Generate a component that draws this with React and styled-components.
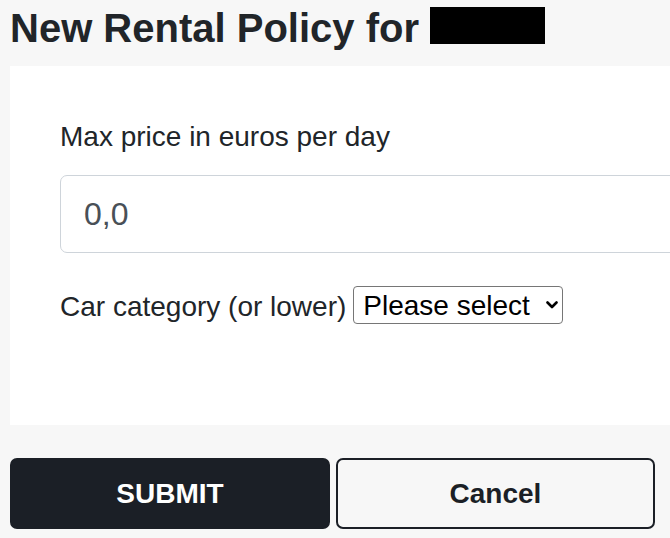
import React, {useState} from "react";
import styled, {createGlobalStyle} from "styled-components";

const GlobalStyle = createGlobalStyle`
  html, body {
    margin: 0;
    padding: 0;
    background-color: #f7f7f7;
    overflow: hidden;
  }

  body {
    font-family: "Liberation Sans", Arial, sans-serif;
    color: #212529;
  }
`;

const Page = styled.div`
  width: 670px;
  height: 538px;
  padding-left: 10px;
  box-sizing: border-box;
`;

const Title = styled.h1`
  margin: 0;
  padding-top: 4px;
  font-size: 40px;
  line-height: 48px;
  font-weight: 700;
  color: #212529;
  display: flex;
  align-items: center;
  gap: 11px;
  white-space: nowrap;
`;

const Redacted = styled.span`
  display: inline-block;
  width: 115px;
  height: 37px;
  background-color: #000;
  margin-top: -6px;
`;

const Card = styled.div`
  margin-top: 14px;
  width: 760px;
  height: 359px;
  box-sizing: border-box;
  background-color: #fff;
  padding: 50px 0 0 50px;
`;

const Label = styled.label`
  display: block;
  font-size: 28px;
  line-height: 42px;
  color: #212529;
  white-space: nowrap;
`;

const PriceInput = styled.input`
  display: block;
  margin-top: 17px;
  width: 100%;
  height: 78px;
  box-sizing: border-box;
  padding: 0 23px;
  border: 1px solid #ced4da;
  border-radius: 7px;
  font-family: inherit;
  font-size: 32px;
  color: #495057;
  background: #fff;
  outline: none;
`;

const CategoryRow = styled.div`
  margin-top: 33px;
  display: flex;
  align-items: center;
  gap: 7px;
  height: 42px;
`;

const SelectWrap = styled.div`
  position: relative;
  display: inline-block;
  margin-top: -4px;
`;

const Select = styled.select`
  appearance: none;
  -webkit-appearance: none;
  width: 210px;
  height: 38px;
  box-sizing: border-box;
  padding: 0 20px 0 9px;
  border: 1px solid #767676;
  border-radius: 4px;
  background: #fff;
  font-family: inherit;
  font-size: 28px;
  color: #000;
  outline: none;
`;

const Chevron = styled.svg`
  position: absolute;
  right: 5px;
  top: 50%;
  transform: translateY(-50%);
  width: 12px;
  height: 9px;
  pointer-events: none;
`;

const Buttons = styled.div`
  margin-top: 33px;
  display: grid;
  grid-template-columns: 320px 319px;
  gap: 6px;
`;

const Button = styled.button`
  height: 71px;
  border-radius: 7px;
  font-family: inherit;
  font-size: 28px;
  font-weight: 700;
  cursor: pointer;
  border: 2px solid #1b1f26;
  background-color: ${p => (p.$primary ? "#1b1f26" : "#f7f7f7")};
  color: ${p => (p.$primary ? "#fff" : "#1b1f26")};
`;

function App() {
    const [price, setPrice] = useState("0,0");
    const [category, setCategory] = useState("");

    return (
        <Page>
            <GlobalStyle/>
            <Title>
                New Rental Policy for <Redacted/>
            </Title>
            <Card>
                <Label htmlFor="maxPrice">Max price in euros per day</Label>
                <PriceInput id="maxPrice" value={price} onChange={e => setPrice(e.target.value)}/>
                <CategoryRow>
                    <Label as="span">Car category (or lower)</Label>
                    <SelectWrap>
                        <Select value={category} onChange={e => setCategory(e.target.value)}>
                            <option value="">Please select</option>
                            <option value="mini">Mini</option>
                            <option value="compact">Compact</option>
                            <option value="mid">Midsize</option>
                            <option value="full">Fullsize</option>
                        </Select>
                        <Chevron viewBox="0 0 12 9">
                            <polyline points="1.5,2 6,6.5 10.5,2" fill="none" stroke="#000" strokeWidth="2.6"
                                      strokeLinecap="round" strokeLinejoin="round"/>
                        </Chevron>
                    </SelectWrap>
                </CategoryRow>
            </Card>
            <Buttons>
                <Button $primary>SUBMIT</Button>
                <Button>Cancel</Button>
            </Buttons>
        </Page>
    );
}

export default App;
